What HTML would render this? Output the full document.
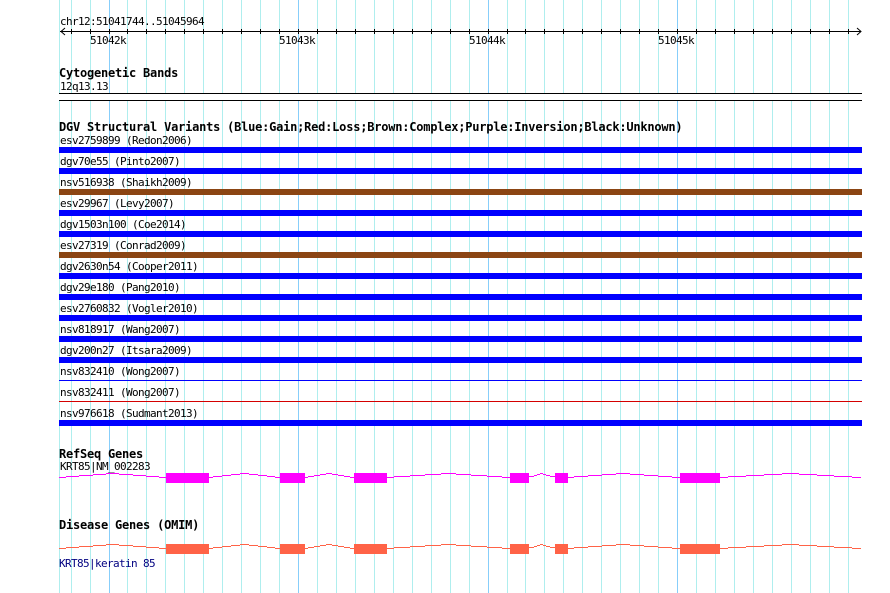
<!DOCTYPE html>
<html>
<head>
<meta charset="utf-8">
<style>
html,body{margin:0;padding:0;background:#fff;}
svg{display:block;position:absolute;left:0;top:0;}
text{font-family:"DejaVu Sans Mono","Liberation Mono",monospace;font-size:11px;letter-spacing:-0.62px;fill:#000;white-space:pre;}
text.b{font-weight:bold;font-size:12px;letter-spacing:-0.22px;}
</style>
</head>
<body>
<svg width="890" height="593" viewBox="0 0 890 593" xmlns="http://www.w3.org/2000/svg" shape-rendering="crispEdges">
<rect width="890" height="593" fill="#fff"/>
<path fill="none" stroke="#afeeee" stroke-width="1" d="M59.5 0V593M71.5 0V593M90.5 0V593M127.5 0V593M146.5 0V593M165.5 0V593M184.5 0V593M203.5 0V593M222.5 0V593M241.5 0V593M260.5 0V593M279.5 0V593M317.5 0V593M336.5 0V593M355.5 0V593M374.5 0V593M393.5 0V593M412.5 0V593M431.5 0V593M450.5 0V593M469.5 0V593M507.5 0V593M525.5 0V593M544.5 0V593M563.5 0V593M582.5 0V593M601.5 0V593M620.5 0V593M639.5 0V593M658.5 0V593M696.5 0V593M715.5 0V593M734.5 0V593M753.5 0V593M772.5 0V593M791.5 0V593M810.5 0V593M829.5 0V593M848.5 0V593"/>
<path fill="none" stroke="#87cefa" stroke-width="1" d="M109.5 0V593M298.5 0V593M488.5 0V593M677.5 0V593"/>

<!-- ruler -->
<path fill="none" stroke="#000" stroke-width="1" d="M60 31.5H861M71.5 29V34M90.5 29V34M109.5 29V34M127.5 29V34M146.5 29V34M165.5 29V34M184.5 29V34M203.5 29V34M222.5 29V34M241.5 29V34M260.5 29V34M279.5 29V34M298.5 29V34M317.5 29V34M336.5 29V34M355.5 29V34M374.5 29V34M393.5 29V34M412.5 29V34M431.5 29V34M450.5 29V34M469.5 29V34M488.5 29V34M507.5 29V34M525.5 29V34M544.5 29V34M563.5 29V34M582.5 29V34M601.5 29V34M620.5 29V34M639.5 29V34M658.5 29V34M677.5 29V34M696.5 29V34M715.5 29V34M734.5 29V34M753.5 29V34M772.5 29V34M791.5 29V34M810.5 29V34M829.5 29V34M848.5 29V34"/>
<path fill="none" stroke="#000" stroke-width="1" shape-rendering="auto" d="M65 28L61 31.5L65 35M857 28L861 31.5L857 35"/>
<text x="60" y="25">chr12:51041744..51045964</text>
<text x="90" y="44">51042k</text>
<text x="279" y="44">51043k</text>
<text x="469" y="44">51044k</text>
<text x="658" y="44">51045k</text>

<!-- cyto -->
<text class="b" x="59" y="77">Cytogenetic Bands</text>
<text x="60" y="90">12q13.13</text>
<rect x="59" y="94" width="803" height="6" fill="#fff"/>
<rect x="59" y="93" width="803" height="1" fill="#000"/>
<rect x="59" y="100" width="803" height="1" fill="#000"/>

<!-- DGV -->
<text class="b" x="59" y="131">DGV Structural Variants (Blue:Gain;Red:Loss;Brown:Complex;Purple:Inversion;Black:Unknown)</text>
<text x="60" y="144">esv2759899 (Redon2006)</text>
<rect x="59" y="147" width="803" height="6" fill="#0000ff"/>
<text x="60" y="165">dgv70e55 (Pinto2007)</text>
<rect x="59" y="168" width="803" height="6" fill="#0000ff"/>
<text x="60" y="186">nsv516938 (Shaikh2009)</text>
<rect x="59" y="189" width="803" height="6" fill="#8b4513"/>
<text x="60" y="207">esv29967 (Levy2007)</text>
<rect x="59" y="210" width="803" height="6" fill="#0000ff"/>
<text x="60" y="228">dgv1503n100 (Coe2014)</text>
<rect x="59" y="231" width="803" height="6" fill="#0000ff"/>
<text x="60" y="249">esv27319 (Conrad2009)</text>
<rect x="59" y="252" width="803" height="6" fill="#8b4513"/>
<text x="60" y="270">dgv2630n54 (Cooper2011)</text>
<rect x="59" y="273" width="803" height="6" fill="#0000ff"/>
<text x="60" y="291">dgv29e180 (Pang2010)</text>
<rect x="59" y="294" width="803" height="6" fill="#0000ff"/>
<text x="60" y="312">esv2760832 (Vogler2010)</text>
<rect x="59" y="315" width="803" height="6" fill="#0000ff"/>
<text x="60" y="333">nsv818917 (Wang2007)</text>
<rect x="59" y="336" width="803" height="6" fill="#0000ff"/>
<text x="60" y="354">dgv200n27 (Itsara2009)</text>
<rect x="59" y="357" width="803" height="6" fill="#0000ff"/>
<text x="60" y="375">nsv832410 (Wong2007)</text>
<rect x="59" y="380" width="803" height="1" fill="#0000ff"/>
<text x="60" y="396">nsv832411 (Wong2007)</text>
<rect x="59" y="401" width="803" height="1" fill="#d40000"/>
<text x="60" y="417">nsv976618 (Sudmant2013)</text>
<rect x="59" y="420" width="803" height="6" fill="#0000ff"/>

<defs>
<path id="intron" fill="none" stroke-width="1" d="M59 477.5H66M66 476.5H79M79 475.5H93M93 474.5H106M106 473.5H119M119 474.5H133M133 475.5H146M146 476.5H159M159 477.5H166M209 477.5H213M213 476.5H222M222 475.5H231M231 474.5H240M240 473.5H249M249 474.5H258M258 475.5H267M267 476.5H275M275 477.5H280M305 477.5H308M308 476.5H314M314 475.5H320M320 474.5H326M326 473.5H332M332 474.5H338M338 475.5H344M344 476.5H350M350 477.5H354M387 477.5H394M394 476.5H410M410 475.5H425M425 474.5H441M441 473.5H456M456 474.5H471M471 475.5H487M487 476.5H502M502 477.5H510M529 476.5H534M534 475.5H537M537 474.5H540M540 473.5H543M543 474.5H546M546 475.5H550M550 476.5H555M568 477.5H574M574 476.5H588M588 475.5H602M602 474.5H616M616 473.5H630M630 474.5H644M644 475.5H658M658 476.5H672M672 477.5H680M720 477.5H728M728 476.5H746M746 475.5H764M764 474.5H782M782 473.5H799M799 474.5H817M817 475.5H834M834 476.5H852M852 477.5H861"/>
<path id="exons" d="M166 473H209V483H166ZM280 473H305V483H280ZM354 473H387V483H354ZM510 473H529V483H510ZM555 473H568V483H555ZM680 473H720V483H680Z"/>
</defs>

<!-- RefSeq -->
<text class="b" x="59" y="458">RefSeq Genes</text>
<text x="60" y="470">KRT85|NM_002283</text>
<use href="#intron" stroke="#ff00ff"/>
<use href="#exons" fill="#ff00ff"/>

<!-- Disease -->
<text class="b" x="59" y="529">Disease Genes (OMIM)</text>
<use href="#intron" stroke="#ff6347" transform="translate(0 71)"/>
<use href="#exons" fill="#ff6347" transform="translate(0 71)"/>
<text x="59" y="567" style="fill:#000080">KRT85|keratin 85</text>
</svg>
</body>
</html>
